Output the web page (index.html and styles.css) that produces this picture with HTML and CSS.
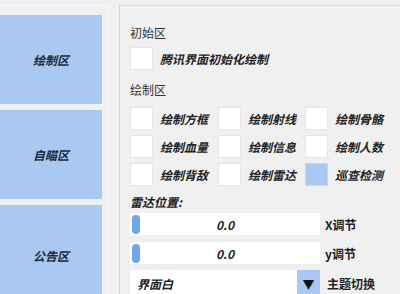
FILE: index.html
```html
<!DOCTYPE html>
<html lang="zh">
<head>
<meta charset="utf-8">
<link rel="stylesheet" href="styles.css">
</head>
<body>
<div class="app">
  <div class="side">
    <div class="nav-btn">绘制区</div>
    <div class="nav-btn">自瞄区</div>
    <div class="nav-btn">公告区</div>
  </div>
  <div class="panel">
    <div class="group-label">初始区</div>
    <div class="check-row first">
      <span class="box"></span><span class="check-text">腾讯界面初始化绘制</span>
    </div>
    <div class="group-label second">绘制区</div>
    <div class="grid">
      <div class="check-row"><span class="box"></span><span class="check-text">绘制方框</span></div>
      <div class="check-row"><span class="box"></span><span class="check-text">绘制射线</span></div>
      <div class="check-row"><span class="box"></span><span class="check-text">绘制骨骼</span></div>
      <div class="check-row"><span class="box"></span><span class="check-text">绘制血量</span></div>
      <div class="check-row"><span class="box"></span><span class="check-text">绘制信息</span></div>
      <div class="check-row"><span class="box"></span><span class="check-text">绘制人数</span></div>
      <div class="check-row"><span class="box"></span><span class="check-text">绘制背敌</span></div>
      <div class="check-row"><span class="box"></span><span class="check-text">绘制雷达</span></div>
      <div class="check-row"><span class="box checked"></span><span class="check-text">巡查检测</span></div>
    </div>
    <div class="group-label radar">雷达位置:</div>
    <div class="field-row">
      <div class="slider"><span class="handle"></span><span class="value">0.0</span></div>
      <span class="side-label">X调节</span>
    </div>
    <div class="field-row second-slider">
      <div class="slider"><span class="handle"></span><span class="value">0.0</span></div>
      <span class="side-label">y调节</span>
    </div>
    <div class="field-row combo-row">
      <div class="combo"><span class="combo-text">界面白</span><span class="drop">▼</span></div>
      <span class="side-label theme">主题切换</span>
    </div>
  </div>
</div>
</body>
</html>
```
FILE: styles.css
```css
* { box-sizing: border-box; }
html, body {
  margin: 0;
  padding: 0;
  width: 400px;
  height: 294px;
  overflow: hidden;
  background: #f0f0f0;
  font-family: "Noto Sans CJK SC", "Noto Sans", sans-serif;
  color: #222;
}
.app {
  display: flex;
  height: 294px;
}
.side {
  width: 109px;
  flex: none;
  margin-top: 5px;
  border-top: 1px solid #fafafa;
  border-right: 1px solid #fbfbfb;
  padding-top: 9px;
  display: flex;
  flex-direction: column;
  gap: 6px;
}
.nav-btn {
  width: 102px;
  height: 89px;
  flex: none;
  background: #a9c9f3;
  display: flex;
  align-items: center;
  justify-content: center;
  font-size: 12px;
  font-weight: bold;
  font-style: italic;
  color: #1f2a3a;
}
.nav-btn:last-child { height: 100px; }
.panel {
  margin-left: 10px;
  margin-top: 5px;
  flex: 1;
  border-top: 1px solid #dadada;
  border-left: 1px solid #d6d6d6;
  padding: 18px 0 0 10px;
}
.group-label {
  font-size: 12px;
  line-height: 18px;
  height: 18px;
  color: #333;
}
.group-label.second { margin-top: 11px; }
.group-label.radar { margin-top: 7px; font-weight: bold; font-style: italic; color: #222; }
.check-row {
  display: flex;
  align-items: center;
  gap: 7px;
  height: 23px;
}
.check-row.first { margin-top: 5px; }
.box {
  width: 23px;
  height: 23px;
  flex: none;
  background: #fff;
  border: 1px solid #e6e6e6;
}
.box.checked {
  background: #a9c9f3;
  border-color: #c5d6ea;
}
.check-text {
  font-size: 12px;
  font-weight: bold;
  font-style: italic;
  white-space: nowrap;
  color: #222;
}
.grid {
  margin-top: 8px;
  display: grid;
  grid-template-columns: 88px 87px auto;
  row-gap: 5px;
}
.field-row {
  display: flex;
  align-items: center;
  gap: 5px;
  margin-top: 2px;
}
.field-row.second-slider { margin-top: 7px; }
.field-row.combo-row { margin-top: 6px; gap: 7px; }
.slider {
  width: 190px;
  height: 22px;
  background: #fff;
  display: flex;
  align-items: center;
  padding-left: 2px;
}
.handle {
  width: 8px;
  height: 19px;
  border-radius: 4px;
  background: #6ea6ee;
  flex: none;
}
.value {
  flex: 1;
  text-align: center;
  font-size: 12px;
  font-weight: bold;
  font-style: italic;
  padding-right: 10px;
  color: #222;
}
.side-label {
  font-size: 12px;
  font-weight: bold;
  color: #222;
}
.combo {
  width: 190px;
  height: 26px;
  display: flex;
  background: #fff;
}
.combo-text {
  flex: 1;
  font-size: 12px;
  font-weight: bold;
  font-style: italic;
  padding: 5px 0 0 7px;
  color: #222;
}
.drop {
  width: 23px;
  background: #a9c9f3;
  display: flex;
  align-items: center;
  justify-content: center;
  font-size: 12px;
  color: #111;
}
```
